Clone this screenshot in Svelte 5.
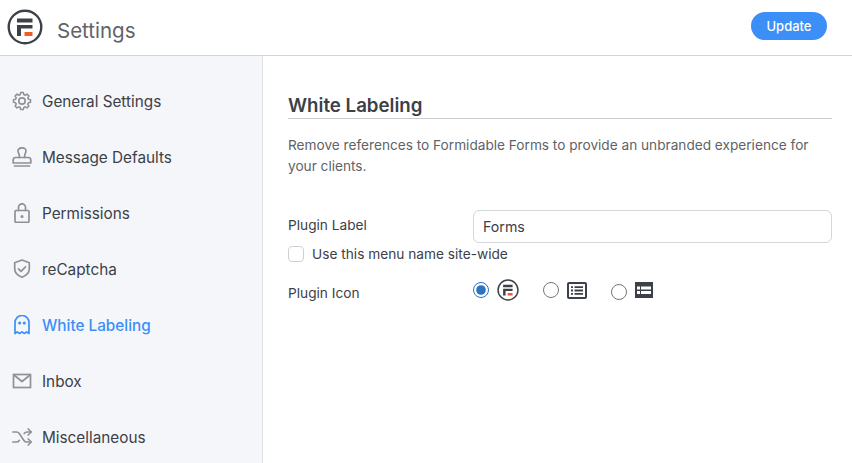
<script lang="ts">
const navItems = [
	{ id: 'general', label: 'General Settings' },
	{ id: 'message', label: 'Message Defaults' },
	{ id: 'permissions', label: 'Permissions' },
	{ id: 'recaptcha', label: 'reCaptcha' },
	{ id: 'white', label: 'White Labeling' },
	{ id: 'inbox', label: 'Inbox' },
	{ id: 'misc', label: 'Miscellaneous' },
];
let active = $state('white');
let pluginLabel = $state('Forms');
let siteWide = $state(false);
let pluginIcon = $state('logo');
</script>

{#snippet logo(size)}
	<svg width={size} height={size} viewBox="0 0 36 36" fill="none">
		<circle cx="18" cy="18" r="16.3" stroke="#3c4048" stroke-width="2.4" />
		<path d="M10 9.500h15.500v4H10zM10 16h15.500v3.500H14V27h-4z" fill="#3c4048" />
		<rect x="17.500" y="23" width="8" height="4" fill="#f15a24" />
	</svg>
{/snippet}

<div class="page">
	<header class="top">
		<div class="brand">
			{@render logo(36)}
			<h1>Settings</h1>
		</div>
		<button class="update" type="button">Update</button>
	</header>

	<div class="body">
		<nav class="side">
			{#each navItems as item}
				<button class="nav" class:active={active === item.id} type="button" onclick={() => (active = item.id)}>
					<svg class="ico" width="20" height="20" viewBox="0 0 20 20" fill="none" stroke="currentColor" stroke-width="1.7" stroke-linecap="round" stroke-linejoin="round">
						{#if item.id === 'general'}
							<path d="M8.500 1.300h3l.5 2.400 1.500.7 2.100-1.300 2.100 2.100-1.300 2.100.7 1.500 2.400.5v3l-2.400.5-.7 1.500 1.300 2.100-2.100 2.100-2.100-1.300-1.500.7-.5 2.400h-3l-.5-2.400-1.500-.7-2.100 1.300-2.100-2.100 1.300-2.100-.7-1.500-2.400-.5v-3l2.400-.5.7-1.500-1.300-2.100 2.100-2.100 2.100 1.300 1.500-.7z" transform="translate(1 .3) scale(.9)" />
							<circle cx="10" cy="10" r="3.200" />
						{:else if item.id === 'message'}
							<path d="M7.300 10.500V8.500C7.300 6.800 6 6 6 4a4 3.200 0 0 1 8 0c0 2-1.300 2.800-1.300 4.500v2" />
							<path d="M1.200 16v-3a2.500 2.500 0 0 1 2.500-2.500h12.600a2.500 2.500 0 0 1 2.500 2.500v3z" />
							<path d="M2.500 19h15" />
						{:else if item.id === 'permissions'}
							<rect x="3" y="7.500" width="14" height="11.800" rx="1" />
							<path d="M6.500 7.500V4.300a3.500 3.500 0 0 1 7 0v3.200" />
							<circle cx="10" cy="13.500" r=".7" fill="currentColor" />
						{:else if item.id === 'recaptcha'}
							<path d="M10 1l7.300 2.700v6c0 4-3 6.900-7.300 8.600-4.300-1.700-7.300-4.600-7.300-8.600v-6z" />
							<path d="M6.500 9.800l2.500 2.500 4.500-4.500" />
						{:else if item.id === 'white'}
							<path d="M3 18.500V7.500a7 7 0 0 1 14 0v11l-2.300-1.600-2.300 1.600-2.400-1.600-2.400 1.600-2.300-1.600z" />
							<circle cx="7.700" cy="8" r=".7" fill="currentColor" />
							<circle cx="12.300" cy="8" r=".7" fill="currentColor" />
						{:else if item.id === 'inbox'}
							<rect x="1.500" y="3.500" width="17" height="13" stroke-linejoin="miter" />
							<path d="M2 4l8 6.500L18 4" />
						{:else}
							<path d="M.8 5h3.500c1.300 0 2.300.6 3 1.600l4.600 6.800c.7 1 1.700 1.600 3 1.600h4" />
							<path d="M.8 15h3.500c1.300 0 2.300-.6 3-1.600M12.200 6.600c.7-1 1.700-1.600 3-1.600h4" />
							<path d="M16.200 2l3 3-3 3M16.200 12l3 3-3 3" />
						{/if}
					</svg>
					<span>{item.label}</span>
				</button>
			{/each}
		</nav>

		<main class="content">
			<h2>White Labeling</h2>
			<p class="intro">Remove references to Formidable Forms to provide an unbranded experience for your clients.</p>

			<div class="row label-row">
				<label for="plugin-label">Plugin Label</label>
				<input id="plugin-label" type="text" bind:value={pluginLabel} />
			</div>
			<label class="check">
				<input type="checkbox" bind:checked={siteWide} />
				<span>Use this menu name site-wide</span>
			</label>

			<div class="row icon-row">
				<span class="field">Plugin Icon</span>
				<div class="choices">
					<label class="choice">
						<input type="radio" name="icon" value="logo" bind:group={pluginIcon} />
						{@render logo(22)}
					</label>
					<label class="choice list">
						<input type="radio" name="icon" value="list" bind:group={pluginIcon} />
						<svg width="20" height="17" viewBox="0 0 20 17" fill="none">
							<rect x="1" y="1" width="18" height="15" rx="1" stroke="#3c4048" stroke-width="2" />
							<path d="M4 4.300h2v1.800H4zM4 7.600h2v1.800H4zM4 10.900h2v1.800H4zM7.500 4.300H16v1.800H7.500zM7.500 7.600H16v1.800H7.500zM7.500 10.900H16v1.800H7.500z" fill="#3c4048" />
						</svg>
					</label>
					<label class="choice third">
						<input type="radio" name="icon" value="form" bind:group={pluginIcon} />
						<svg width="18" height="16" viewBox="0 0 18 16">
							<path d="M0 0h18v16H0z" fill="#3c4048" />
							<path d="M2 4.500h3v3H2zM2 9h3v3H2zM6 4.500h10v3H6zM6 9h10v3H6z" fill="#fff" />
						</svg>
					</label>
				</div>
			</div>
		</main>
	</div>
</div>

<style>
:global(body) {
	margin: 0;
	background: #fff;
}

.page {
	width: 852px;
	height: 463px;
	overflow: hidden;
	display: flex;
	flex-direction: column;
	font-family: Inter, "Liberation Sans", sans-serif;
	color: #3c4048;
}

.top {
	box-sizing: border-box;
	height: 56px;
	flex-shrink: 0;
	display: flex;
	align-items: center;
	justify-content: space-between;
	padding: 0 25px 4px 7px;
	border-bottom: 1px solid #d3d3d5;
}

.brand {
	display: flex;
	align-items: center;
	gap: 14px;
}

.brand svg {
	margin-top: 2px;
}

h1 {
	margin: 10px 0 0;
	font-size: 20.500px;
	font-weight: 400;
	color: #5f6368;
}

.update {
	width: 76px;
	height: 28px;
	border: 0;
	border-radius: 14px;
	background: #3b8ff7;
	color: #fff;
	font: 500 13px Inter, "Liberation Sans", sans-serif;
}

.body {
	flex: 1;
	display: flex;
	min-height: 0;
}

.side {
	box-sizing: border-box;
	width: 263px;
	flex-shrink: 0;
	padding-top: 17px;
	background: #f5f6fa;
	border-right: 1px solid #dfe1e5;
}

.nav {
	width: 100%;
	height: 56px;
	padding: 0 0 0 12px;
	display: flex;
	align-items: center;
	gap: 10px;
	border: 0;
	background: none;
	color: #3c4048;
	font: 400 15.300px Inter, "Liberation Sans", sans-serif;
	text-align: left;
}

.ico {
	color: #8f9196;
	flex-shrink: 0;
}

.nav.active,
.nav.active .ico {
	color: #3b8ff7;
	font-weight: 500;
}

.content {
	flex: 1;
	padding: 37px 20px 0 25px;
}

h2 {
	margin: 0;
	font-size: 18.700px;
	line-height: 25px;
	font-weight: 600;
	color: #3c4048;
	border-bottom: 1px solid #c9cbcf;
}

.intro {
	margin: 16px 0 0;
	font-size: 13.650px;
	line-height: 21px;
	color: #5f6368;
}

.row {
	display: flex;
	align-items: center;
}

.row > label,
.field {
	width: 185px;
	flex-shrink: 0;
	font-size: 13.700px;
	color: #3c4048;
}

.label-row {
	margin-top: 33px;
}

.label-row > label {
	margin-top: -3px;
}

.label-row input {
	box-sizing: border-box;
	flex: 1;
	min-width: 0;
	height: 33px;
	padding: 0 9px;
	border: 1px solid #d5d6da;
	border-radius: 6px;
	font: 400 14.200px Inter, "Liberation Sans", sans-serif;
	color: #3c4048;
}

.check {
	display: flex;
	align-items: center;
	gap: 8px;
	margin-top: 3px;
	font-size: 13.700px;
	color: #3c4048;
}

.check input {
	appearance: none;
	width: 16px;
	height: 16px;
	margin: 0;
	border: 1px solid #cfd0d4;
	border-radius: 4px;
	background: #fff;
}

.icon-row {
	margin-top: 17px;
}

.field {
	margin-top: 5px;
}

.choices {
	display: flex;
	align-items: center;
	gap: 24px;
}

.choice {
	display: flex;
	align-items: center;
	gap: 8px;
}

.choice input {
	width: 16px;
	height: 16px;
	margin: 0;
	accent-color: #2b74c0;
}

.choice.list svg {
	margin-top: 1px;
}

.choice.third {
	margin-top: 3px;
}

.choice.third svg {
	margin-top: -3px;
}
</style>
